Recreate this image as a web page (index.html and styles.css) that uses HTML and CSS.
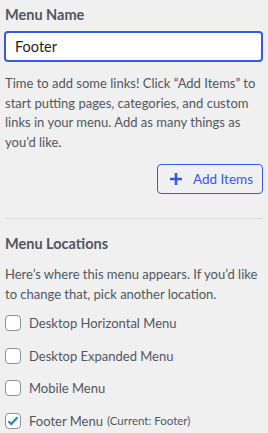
FILE: index.html
```html
<!DOCTYPE html>
<html lang="en">
<head>
    <meta charset="UTF-8">
    <title>Menu Settings</title>
    <link rel="stylesheet" href="styles.css">
</head>
<body>

<div class="panel">
    <div class="field">
        <label class="heading" for="menuName">Menu Name</label>
        <input type="text" id="menuName" class="name-input" value="Footer">
    </div>

    <p class="help">Time to add some links! Click “Add Items” to start putting pages, categories, and custom links in your menu. Add as many things as you’d like.</p>

    <div class="actions">
        <button class="add-btn" type="button">
            <svg class="plus" width="12" height="12" viewBox="0 0 12 12">
                <path d="M6 0v12M0 6h12" stroke="currentColor" stroke-width="2.6"/>
            </svg>
            Add Items
        </button>
    </div>

    <hr class="divider">

    <h3 class="heading">Menu Locations</h3>
    <p class="help">Here’s where this menu appears. If you’d like to change that, pick another location.</p>

    <ul class="locations">
        <li><label><span class="box"></span>Desktop Horizontal Menu</label></li>
        <li><label><span class="box"></span>Desktop Expanded Menu</label></li>
        <li><label><span class="box"></span>Mobile Menu</label></li>
        <li>
            <label>
                <span class="box checked">
                    <svg width="14" height="14" viewBox="0 0 14 14">
                        <path d="M2.5 7.2l2.8 2.9L11.5 3.3" fill="none" stroke="currentColor" stroke-width="2.2"/>
                    </svg>
                </span>
                Footer Menu <span class="current">(Current: Footer)</span>
            </label>
        </li>
    </ul>
</div>

</body>
</html>
```

FILE: styles.css
```css
body {
    margin: 0;
    background-color: #f0f0f1;
    font-family: Lato, "Noto Sans", sans-serif;
    font-size: 13px;
    color: #50575e;
}

.panel {
    padding: 6px 5px 0 5px;
}

.heading {
    display: block;
    margin: 0;
    font-size: 14.5px;
    font-weight: 700;
    line-height: 18px;
    color: #50575e;
}

.field .heading {
    margin-bottom: 7px;
}

.name-input {
    box-sizing: border-box;
    width: 259px;
    height: 31px;
    margin-left: -1px;
    padding: 0 9px;
    border: 2px solid #3858e9;
    border-radius: 4px;
    background: #fff;
    font-family: inherit;
    font-size: 14.5px;
    color: #1e1e1e;
    outline: none;
}

.help {
    margin: 12px 0 0 0;
    line-height: 19.5px;
}

.actions {
    display: flex;
    justify-content: flex-end;
    margin-top: 12px;
}

.add-btn {
    display: flex;
    align-items: center;
    gap: 11px;
    height: 30px;
    padding: 0 9px 0 12px;
    border: 1px solid #3858e9;
    border-radius: 4px;
    background: transparent;
    font-family: inherit;
    font-size: 13.5px;
    color: #3858e9;
    cursor: pointer;
}

.plus {
    color: #3858e9;
}

.divider {
    margin: 24px 0 16px 0;
    border: 0;
    border-top: 1px solid #dcdcde;
}

.locations {
    list-style: none;
    margin: 9px 0 0 0;
    padding: 0;
}

.locations li {
    height: 32.5px;
}

.locations label {
    display: flex;
    align-items: center;
    gap: 8px;
    height: 20px;
}

.box {
    box-sizing: border-box;
    display: flex;
    align-items: center;
    justify-content: center;
    width: 16px;
    height: 16px;
    border: 1px solid #8c8f94;
    border-radius: 4px;
    background: #fff;
}

.box.checked {
    color: #3582c4;
}

.current {
    margin-left: -4px;
    font-size: 11.5px;
}
```
